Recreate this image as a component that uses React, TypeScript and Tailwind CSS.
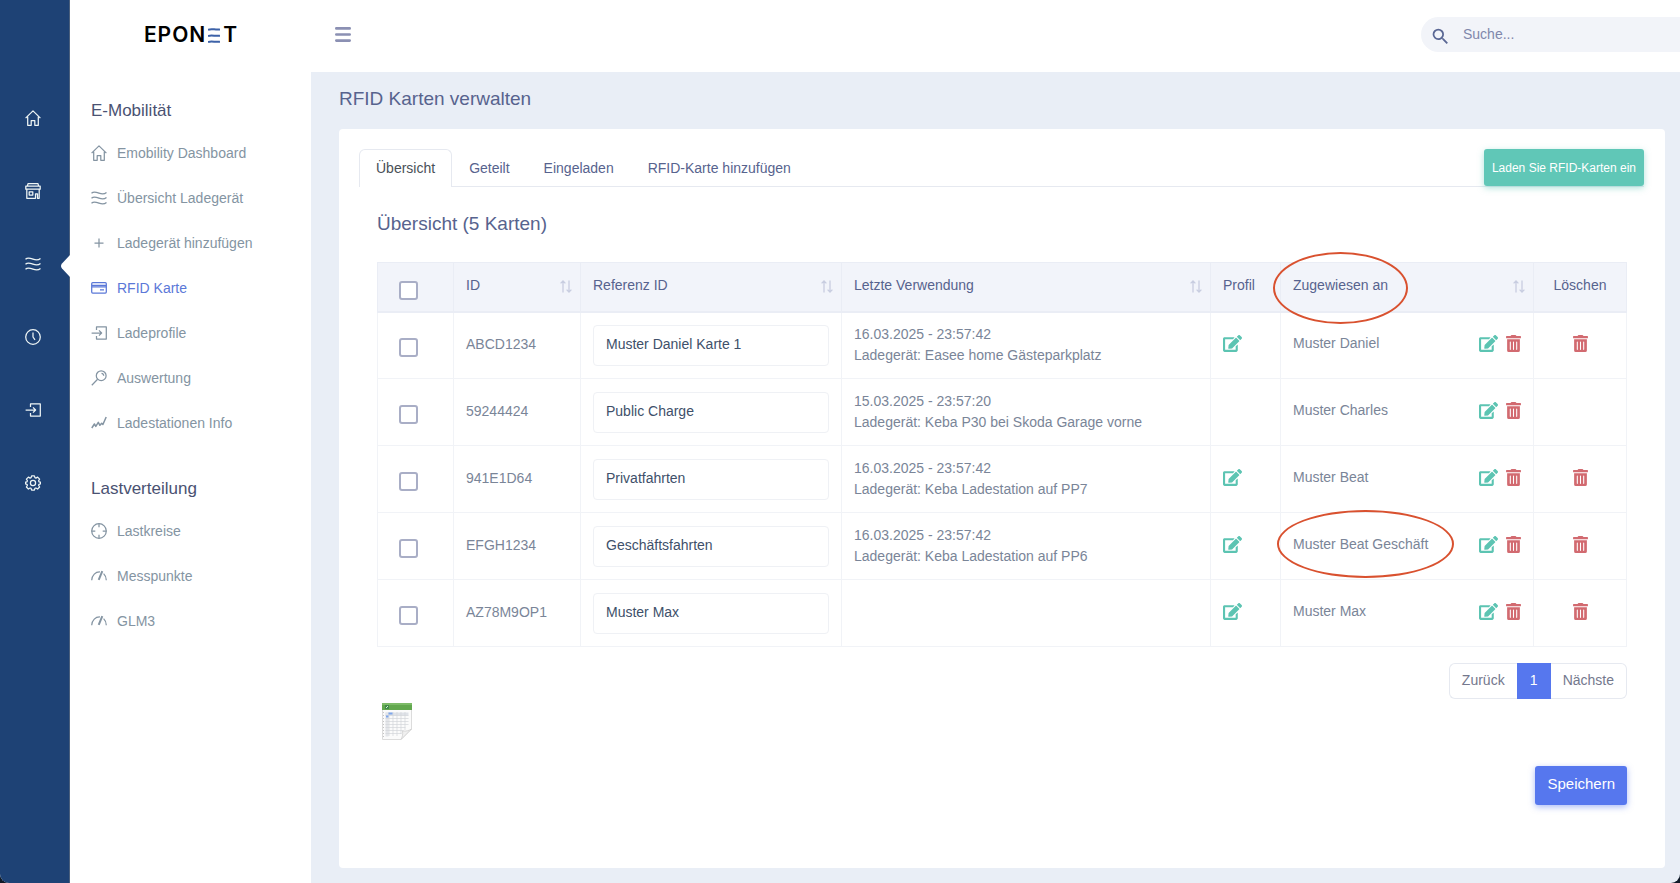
import * as React from 'react'
import { FaEdit, FaTrashAlt } from 'react-icons/fa'
import { MdSearch } from 'react-icons/md'

type IconName =
  | 'home'
  | 'store'
  | 'waves'
  | 'clock'
  | 'enter'
  | 'gear'
  | 'plus'
  | 'card'
  | 'lens'
  | 'graph'
  | 'target'
  | 'meter'

const glyphs: Record<IconName, React.ReactNode> = {
  home: <path d="M.6 8.100 8 .9l7.400 7.200M2.700 6.800v8.500h3.500v-4.800h3.600v4.800h3.500V6.800" />,
  store: (
    <path d="M3 .7h10l.6 2.500H2.400L3 .7ZM.8 3.200h14.400v3H.8v-3ZM1.800 6.200v9.100h8.700v-4.500h2v4.500h1.700V6.200M4.200 8.800h3.600v3.200H4.200V8.800Z" />
  ),
  waves: (
    <path d="M.5 3.200C3 .8 5.500 2.200 8 3.200s5 1.500 7.500-.7M.5 8.200C3 5.800 5.500 7.200 8 8.200s5 1.500 7.500-.7M.5 13.200C3 10.800 5.500 12.200 8 13.200s5 1.500 7.500-.7" />
  ),
  clock: (
    <>
      <circle cx="8" cy="8" r="7.300" />
      <path d="M8 3.500V8l2 2.800" />
    </>
  ),
  enter: <path d="M5.500 5V1.900h9.800v12.200H5.500V11M.6 8h9.700M8 5.400 10.600 8 8 10.600" />,
  gear: (
    <>
      <circle cx="8" cy="8" r="2.600" />
      <path d="M6.600.8h2.800l.5 1.900 1 .4 1.700-1 2 2-1 1.700.4 1 1.500.4v1.600l-1.500.5-.4 1 1 1.700-2 2-1.700-1-1 .4-.5 1.800H6.600l-.5-1.800-1-.4-1.700 1-2-2 1-1.700-.4-1-1.500-.5V7.200L2 6.800l.4-1-1-1.700 2-2 1.700 1 1-.4.5-1.900Z" />
    </>
  ),
  plus: <path d="M8 3.500v9M3.500 8h9" />,
  card: (
    <>
      <rect x=".7" y="2.700" width="14.600" height="10.300" rx="1" />
      <path d="M.7 5.300h14.600M.7 6.800h14.600M9 9.800h4" />
    </>
  ),
  lens: (
    <>
      <circle cx="10.200" cy="5.700" r="4.900" />
      <path d="M6.600 9.200.8 15.200M10.500 3.300c1.500.2 2.200 1.200 2.200 2.500" />
    </>
  ),
  graph: <path d="m.8 13 2.600-4 1.400 2.400 2.500-4 1.600 2.900 1.800-2 1.200 1.200 3.300-7.500" strokeWidth="1.500" />,
  target: (
    <>
      <circle cx="8" cy="8" r="7.300" />
      <path d="M8 .7v3.600M8 11.700v3.600M.7 8h3.600M11.700 8h3.600" />
    </>
  ),
  meter: (
    <>
      <path d="M.7 12.300C1 7 4.500 3.800 9 4M12.600 5.600c1.700 1.500 2.600 3.800 2.700 6.700" />
      <path d="M11.300 3.200 7.700 11.800" strokeWidth="2" />
    </>
  ),
}

function LineIcon({ name }: { name: IconName }) {
  return (
    <svg
      viewBox="0 0 16 16"
      className="size-4 shrink-0"
      fill="none"
      stroke="currentColor"
      strokeWidth="1.250"
      strokeLinejoin="round"
      aria-hidden="true"
    >
      {glyphs[name]}
    </svg>
  )
}

const rail: { icon: IconName; label: string }[] = [
  { icon: 'home', label: 'Home' },
  { icon: 'store', label: 'Gebäude' },
  { icon: 'waves', label: 'E-Mobilität' },
  { icon: 'clock', label: 'Verlauf' },
  { icon: 'enter', label: 'Zugang' },
  { icon: 'gear', label: 'Einstellungen' },
]

const sections: { title: string; items: { icon: IconName; label: string; active?: boolean }[] }[] = [
  {
    title: 'E-Mobilität',
    items: [
      { icon: 'home', label: 'Emobility Dashboard' },
      { icon: 'waves', label: 'Übersicht Ladegerät' },
      { icon: 'plus', label: 'Ladegerät hinzufügen' },
      { icon: 'card', label: 'RFID Karte', active: true },
      { icon: 'enter', label: 'Ladeprofile' },
      { icon: 'lens', label: 'Auswertung' },
      { icon: 'graph', label: 'Ladestationen Info' },
    ],
  },
  {
    title: 'Lastverteilung',
    items: [
      { icon: 'target', label: 'Lastkreise' },
      { icon: 'meter', label: 'Messpunkte' },
      { icon: 'meter', label: 'GLM3' },
    ],
  },
]

const tabs = ['Übersicht', 'Geteilt', 'Eingeladen', 'RFID-Karte hinzufügen']

interface Card {
  id: string
  reference: string
  lastUse?: string
  charger?: string
  assigned: string
  profile: boolean
  removable: boolean
  marked?: boolean
}

const cards: Card[] = [
  { id: 'ABCD1234', reference: 'Muster Daniel Karte 1', lastUse: '16.03.2025 - 23:57:42', charger: 'Easee home Gästeparkplatz', assigned: 'Muster Daniel', profile: true, removable: true },
  { id: '59244424', reference: 'Public Charge', lastUse: '15.03.2025 - 23:57:20', charger: 'Keba P30 bei Skoda Garage vorne', assigned: 'Muster Charles', profile: false, removable: false },
  { id: '941E1D64', reference: 'Privatfahrten', lastUse: '16.03.2025 - 23:57:42', charger: 'Keba Ladestation auf PP7', assigned: 'Muster Beat', profile: true, removable: true },
  { id: 'EFGH1234', reference: 'Geschäftsfahrten', lastUse: '16.03.2025 - 23:57:42', charger: 'Keba Ladestation auf PP6', assigned: 'Muster Beat Geschäft', profile: true, removable: true, marked: true },
  { id: 'AZ78M9OP1', reference: 'Muster Max', assigned: 'Muster Max', profile: true, removable: true },
]

function Logo() {
  return (
    <a href="#" className="flex items-center gap-[3px] font-[Inter,sans-serif] text-[21px] font-semibold text-black">
      <span className="flex gap-px">
        <span>E</span>
        <span>P</span>
        <span>O</span>
        <span>N</span>
      </span>
      <svg viewBox="0 0 12 15" className="h-[15px] w-3" fill="none" stroke="#3d62a8" strokeWidth="2" aria-hidden="true">
        <path d="M0 1.700C4 .2 7 2.200 12 1.400M0 8c4-1.500 7 .5 12-.3M0 14c4-1.500 7 .5 12-.3" />
      </svg>
      <span>T</span>
    </a>
  )
}

function Checkbox({ label }: { label: string }) {
  return (
    <input
      type="checkbox"
      aria-label={label}
      className="mt-1 block size-[19px] appearance-none rounded-[3px] border-2 border-[#a9aec6] bg-white checked:bg-[#5677ee]"
    />
  )
}

function EditButton({ label }: { label: string }) {
  return (
    <button type="button" aria-label={label} className="block text-[#5cc4b2]">
      <FaEdit className="h-[17px] w-[19px]" />
    </button>
  )
}

function DeleteButton({ label }: { label: string }) {
  return (
    <button type="button" aria-label={label} className="block text-[#d26a70]">
      <FaTrashAlt className="h-[17px] w-[15px]" />
    </button>
  )
}

function SortArrows() {
  return (
    <svg viewBox="0 0 12 13" className="mt-1 -mr-1 h-[13px] w-3" fill="none" stroke="#c8cde0" strokeWidth="1.300" aria-hidden="true">
      <path d="M3 12.500V1M.6 3.400 3 1l2.400 2.400M9 .5V12M6.600 9.600 9 12l2.400-2.400" />
    </svg>
  )
}

function HeadCell({ title, sortable, children }: { title: string; sortable?: boolean; children?: React.ReactNode }) {
  return (
    <th className="relative border border-b-2 border-[#eaedf5] px-3 pb-1 text-left font-normal">
      <span className="flex items-center justify-between">
        {title}
        {sortable && <SortArrows />}
      </span>
      {children}
    </th>
  )
}

function CardTable() {
  return (
    <table className="w-full table-fixed border-collapse text-sm">
      <colgroup>
        <col className="w-[76px]" />
        <col className="w-[127px]" />
        <col className="w-[261px]" />
        <col />
        <col className="w-[70px]" />
        <col className="w-[253px]" />
        <col className="w-[93px]" />
      </colgroup>
      <thead>
        <tr className="h-[49px] bg-[#f2f4fa] text-[#57638e]">
          <th className="border border-b-2 border-[#eaedf5] pt-1 pl-[21px]">
            <Checkbox label="Alle auswählen" />
          </th>
          <HeadCell title="ID" sortable />
          <HeadCell title="Referenz ID" sortable />
          <HeadCell title="Letzte Verwendung" sortable />
          <HeadCell title="Profil" />
          <HeadCell title="Zugewiesen an" sortable>
            <span className="pointer-events-none absolute -top-[11px] -left-2 h-[72px] w-[135px] rounded-[50%] border-2 border-[#d9512f]" />
          </HeadCell>
          <th className="border border-b-2 border-[#eaedf5] pb-1 text-center font-normal">Löschen</th>
        </tr>
      </thead>
      <tbody className="text-[#7a8598]">
        {cards.map((card) => (
          <tr key={card.id} className="h-[67px]">
            <td className="border border-[#f1f3f7] pl-[21px]">
              <Checkbox label={`${card.id} auswählen`} />
            </td>
            <td className="border border-[#f1f3f7] px-3 pb-0.5">{card.id}</td>
            <td className="border border-[#f1f3f7] px-3">
              <input
                defaultValue={card.reference}
                aria-label={`Referenz ID ${card.id}`}
                className="block h-[41px] w-full rounded border border-[#eff1f5] bg-white px-3 pb-0.5 text-[#40506a] outline-none"
              />
            </td>
            <td className="border border-[#f1f3f7] px-3 leading-[21px]">
              {card.lastUse && (
                <>
                  {card.lastUse}
                  <br />
                  Ladegerät: {card.charger}
                </>
              )}
            </td>
            <td className="border border-[#f1f3f7] px-3 pb-1">{card.profile && <EditButton label="Profil bearbeiten" />}</td>
            <td className="relative border border-[#f1f3f7] px-3 pb-1">
              <div className="flex items-center gap-2">
                <span className="flex-1">{card.assigned}</span>
                <EditButton label="Zuweisung bearbeiten" />
                <DeleteButton label="Zuweisung löschen" />
              </div>
              {card.marked && (
                <span className="pointer-events-none absolute -top-[3px] -left-1 h-[68px] w-[177px] rounded-[50%] border-2 border-[#d9512f]" />
              )}
            </td>
            <td className="border border-[#f1f3f7] pb-1">
              <div className="flex justify-center">{card.removable && <DeleteButton label="Karte löschen" />}</div>
            </td>
          </tr>
        ))}
      </tbody>
    </table>
  )
}

function SheetIcon() {
  return (
    <svg viewBox="0 0 30 37" className="h-[37px] w-[30px]" aria-hidden="true">
      <path d="M.5 1h29v25L19 36.500H.5Z" fill="#fbfbfb" stroke="#dcdcdc" />
      <path d="M0 0h30v7H0z" fill="#62a84e" />
      <path d="M0 0h30v2H0z" fill="#7dbb68" />
      <rect x="3" y="2" width="4" height="4" fill="#3f8a4a" />
      <path d="m4 5 2-2" stroke="#d7ecd0" />
      <path d="M3.500 9.500h23v3h-23z" fill="#dfe2e8" />
      <path d="M3.500 9.500h3v24h-3z" fill="#e3e5e9" />
      <path d="M3.500 12.500h23M3.500 15.500h23M3.500 18.500h23M3.500 21.500h23M3.500 24.500h20M3.500 27.500h18M3.500 30.500h16M7 9v24M11 9v24M15 9v24M19 9v22M23 9v18" stroke="#d3d5da" strokeWidth=".7" />
      <path d="M6.500 9.500h4v2h-4zM4 12.500h2.500v2H4z" fill="#7ea6ea" />
      <path d="M1.500 9v26" stroke="#c4c4c4" strokeDasharray="1 2" />
      <path d="M19 36.500c1.500-3 2-5 1.500-8.500 4 .5 6.500-.5 9-2Z" fill="#f0f0f0" stroke="#cfcfcf" strokeWidth=".8" />
    </svg>
  )
}

export default function App() {
  const [tab, setTab] = React.useState(tabs[0])

  return (
    <div className="bg-[#101a28] font-['Liberation_Sans',Arial,sans-serif]">
      <div className="flex min-h-screen overflow-hidden rounded-b-[9px] bg-[#e9eef6]">
        <nav aria-label="Bereiche" className="relative w-[70px] shrink-0 border-r border-[#4a5f7c] bg-[#1e4275] pt-[81px] pr-1 text-[#eef5f5]">
          {rail.map((item) => (
            <a key={item.label} href="#" aria-label={item.label} className="flex h-[73px] items-center justify-center">
              <LineIcon name={item.icon} />
            </a>
          ))}
          <svg viewBox="0 0 10 22" className="absolute top-[255px] -right-px h-[22px] w-2.5" fill="#fff" aria-hidden="true">
            <path d="M10 0 2 8.500Q0 11 2 13.500L10 22Z" />
          </svg>
        </nav>

        <aside className="w-[241px] shrink-0 bg-white">
          <div className="flex h-[72px] items-center justify-center pb-0.5">
            <Logo />
          </div>
          <div className="flex flex-col gap-[25px] pt-5 pl-[21px]">
            {sections.map((section) => (
              <div key={section.title}>
                <h2 className="text-[17px] leading-[38px] text-[#4a5272]">{section.title}</h2>
                <ul>
                  {section.items.map((item) => (
                    <li key={item.label}>
                      <a
                        href="#"
                        className={`flex h-[45px] items-center gap-2.5 text-sm ${item.active ? 'text-[#5b78d8]' : 'text-[#8494a2]'}`}
                      >
                        <LineIcon name={item.icon} />
                        {item.label}
                      </a>
                    </li>
                  ))}
                </ul>
              </div>
            ))}
          </div>
        </aside>

        <div className="flex min-w-0 flex-1 flex-col">
          <header className="flex h-[72px] items-center justify-between bg-white pb-1 pl-6">
            <button type="button" aria-label="Menü" className="text-[#8b90b3]">
              <svg viewBox="0 0 16 15" className="h-[15px] w-4" fill="none" stroke="currentColor" strokeWidth="2.600" strokeLinecap="round">
                <path d="M1.300 1.400h13.400M1.300 7.500h13.400M1.300 13.600h13.400" />
              </svg>
            </button>
            <label className="flex h-[35px] w-[259px] items-center gap-3 rounded-l-full bg-[#f2f4f9] pl-[9px]">
              <MdSearch className="mt-1 size-[21px] shrink-0 text-[#5a6794]" aria-hidden="true" />
              <input
                type="search"
                placeholder="Suche..."
                aria-label="Suche"
                className="w-full min-w-0 bg-transparent text-sm text-[#57638e] outline-none placeholder:text-[#8087ab]"
              />
            </label>
          </header>

          <main className="flex flex-1 flex-col pr-[15px] pb-[15px] pl-7">
            <h1 className="mb-1 text-[19px] leading-[53px] text-[#57638e]">RFID Karten verwalten</h1>

            <div className="flex-1 rounded bg-white p-5 pr-[21px]">
              <div className="flex h-[38px] justify-between border-b border-[#e6e9f0] text-sm">
                <div role="tablist" className="flex">
                  {tabs.map((name) => (
                    <button
                      key={name}
                      type="button"
                      role="tab"
                      aria-selected={name === tab}
                      onClick={() => setTab(name)}
                      className={`h-[38px] rounded-t-md border border-b-0 px-4 pb-0.5 ${
                        name === tab ? 'border-[#e6e9f0] bg-white text-[#495057]' : 'border-transparent text-[#57638e]'
                      }`}
                    >
                      {name}
                    </button>
                  ))}
                </div>
                <button type="button" className="h-[37px] rounded-[3px] bg-[#60c7b7] px-2 text-xs text-white shadow-[0_2px_6px_rgba(96,199,183,0.5)]">
                  Laden Sie RFID-Karten ein
                </button>
              </div>

              <div className="pt-[25px] pr-[17px] pl-[18px]">
                <h2 className="mb-[26px] text-[19px] leading-6 text-[#57638e]">Übersicht (5 Karten)</h2>
                <CardTable />

                <div className="mt-4 flex justify-end">
                  <nav aria-label="Seiten" className="flex h-9 text-sm text-[#74788d]">
                    <a href="#" className="flex items-center rounded-l-md border border-r-0 border-[#e6e9f0] px-3 pb-0.5">
                      Zurück
                    </a>
                    <a href="#" aria-current="page" className="flex w-[34px] items-center justify-center bg-[#5677ee] pb-0.5 text-white">
                      1
                    </a>
                    <a href="#" className="flex items-center rounded-r-md border border-l-0 border-[#e6e9f0] px-3 pb-0.5">
                      Nächste
                    </a>
                  </nav>
                </div>

                <a href="#" aria-label="Tabelle exportieren" className="mt-1 ml-[5px] inline-block align-top">
                  <SheetIcon />
                </a>

                <div className="mt-[26px] flex justify-end">
                  <button type="button" className="h-[39px] rounded-[3px] bg-[#5677ee] px-3 pb-0.5 text-[15px] text-white shadow-[0_2px_6px_rgba(86,119,238,0.5)]">
                    Speichern
                  </button>
                </div>
              </div>
            </div>
          </main>
        </div>
      </div>
    </div>
  )
}
